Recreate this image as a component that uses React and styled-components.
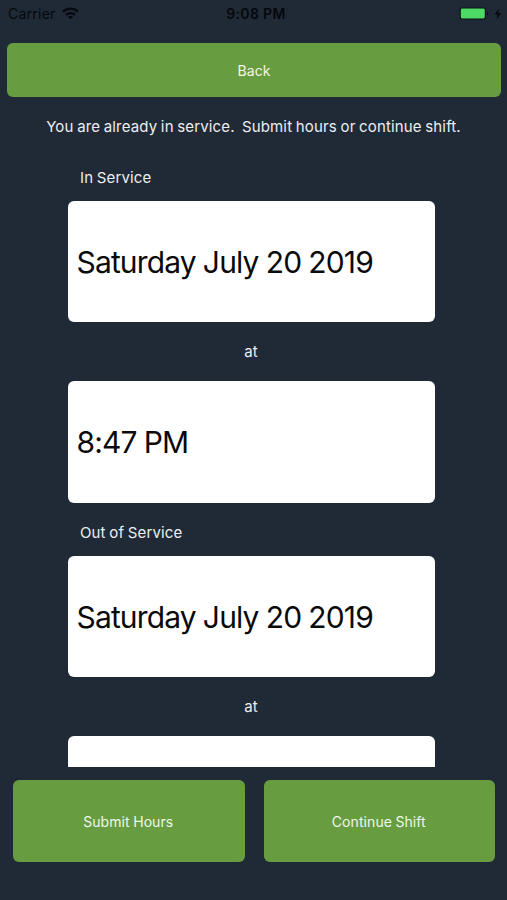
import React from 'react'
import styled, { createGlobalStyle } from "styled-components";

const shifts = [
  { label: "In Service", date: "Saturday July 20 2019", time: "8:47 PM" },
  { label: "Out of Service", date: "Saturday July 20 2019", time: "" },
];

const WifiIcon = () => (
  <svg width="17" height="13" viewBox="0 0 17 13" fill="none" stroke="#05080c" strokeWidth="2.3">
    <path d="M1 4.7C5.2 .6 11.8 .6 16 4.7" />
    <path d="M3.9 7.9C6.5 5.4 10.5 5.4 13.1 7.9" />
    <path d="M8.5 12.2L5.9 9.7C7.4 8.4 9.6 8.4 11.1 9.7Z" fill="#05080c" stroke="none" />
  </svg>
);

const BatteryIcon = () => (
  <svg width="30" height="13" viewBox="0 0 30 13">
    <rect x="0.6" y="0.4" width="26.4" height="12.2" rx="2.8" fill="#0a1014" />
    <rect x="1.8" y="1.6" width="24" height="9.8" rx="1.4" fill="#4cd964" />
    <path d="M28 4.6C29.4 5.1 29.4 7.9 28 8.4Z" fill="#0a1014" />
  </svg>
);

const BoltIcon = () => (
  <svg width="8" height="12" viewBox="0 0 8 12">
    <path d="M5 .6L.7 6.6H3.5L2.6 11.3L7.3 5.1H4.3Z" fill="#05080c" />
  </svg>
);

const App = () => {
  return (
    <>
      <GlobalStyle />
      <Screen>
        <StatusBar>
          <div className="carrier">
            <span>Carrier</span>
            <WifiIcon />
          </div>
          <div className="clock">9:08 PM</div>
          <div className="power">
            <BatteryIcon />
            <BoltIcon />
          </div>
        </StatusBar>
        <BackButton>Back</BackButton>
        <Message>{"You are already in service.  Submit hours or continue shift."}</Message>
        <ShiftList>
          {shifts.map((shift) => (
            <Shift key={shift.label}>
              <Label>{shift.label}</Label>
              <Field>{shift.date}</Field>
              <Separator>at</Separator>
              <Field>{shift.time}</Field>
            </Shift>
          ))}
        </ShiftList>
        <Actions>
          <ActionButton>Submit Hours</ActionButton>
          <ActionButton>Continue Shift</ActionButton>
        </Actions>
      </Screen>
    </>
  );
}

const GlobalStyle = createGlobalStyle`
  * {
    box-sizing: border-box;
  }

  body {
    margin: 0;
    background-color: #202a36;
    font-family: Inter, "Liberation Sans", sans-serif;
  }
`;

const Screen = styled.div`
  display: flex;
  flex-direction: column;
  width: 100%;
  height: 900px;
  overflow: hidden;
  background-color: #202a36;
`;

const StatusBar = styled.div`
  display: grid;
  grid-template-columns: 1fr auto 1fr;
  align-items: center;
  height: 27px;
  flex-shrink: 0;
  margin-bottom: 16.4px;
  padding: 0 5px 0 8px;
  color: #05080c;
  font-size: 14px;

  .carrier {
    display: flex;
    align-items: center;
    gap: 6px;
    letter-spacing: 0.25px;
  }

  .clock {
    padding-left: 2px;
    font-weight: 600;
    letter-spacing: 0.35px;
  }

  .power {
    display: flex;
    align-items: center;
    justify-content: flex-end;
    gap: 5px;
  }
`;

const Button = styled.button`
  border: none;
  border-radius: 6px;
  background-color: #679d40;
  color: #f0f7ea;
  font-family: inherit;
  font-size: 14px;
  letter-spacing: 0.08px;
  word-spacing: -0.6px;
  cursor: pointer;
`;

const BackButton = styled(Button)`
  height: 54px;
  margin: 0 6px 0 7px;
  flex-shrink: 0;
`;

const Message = styled.p`
  margin: 0;
  height: 50.4px;
  line-height: 59px;
  flex-shrink: 0;
  color: #eceef2;
  font-size: 15px;
  letter-spacing: 0.14px;
  word-spacing: -0.7px;
  text-align: center;
  white-space: pre;
`;

const ShiftList = styled.div`
  height: 619.2px;
  margin: 0 72px 0 68px;
  flex-shrink: 0;
  overflow: hidden;
`;

const Shift = styled.div`
  display: flex;
  flex-direction: column;
`;

const Label = styled.div`
  height: 53px;
  line-height: 48px;
  padding: 6px 0 0 12px;
  color: #eceef2;
  font-size: 15px;
  letter-spacing: 0.12px;
  word-spacing: -0.6px;
`;

const Field = styled.div`
  display: flex;
  align-items: center;
  height: 121.7px;
  padding-left: 8.5px;
  border-radius: 6px;
  background-color: #fff;
  color: #0a0a0a;
  font-size: 30px;
  letter-spacing: -0.85px;
  word-spacing: -0.5px;
`;

const Separator = styled.div`
  height: 58.5px;
  line-height: 59px;
  padding-right: 1px;
  color: #eceef2;
  font-size: 15px;
  text-align: center;
`;

const Actions = styled.div`
  display: grid;
  grid-template-columns: 1fr 1fr;
  gap: 19px;
  padding: 13px 12px 0 13px;
`;

const ActionButton = styled(Button)`
  height: 82px;
  padding: 2px 1px 0 0;
`;

export default App
